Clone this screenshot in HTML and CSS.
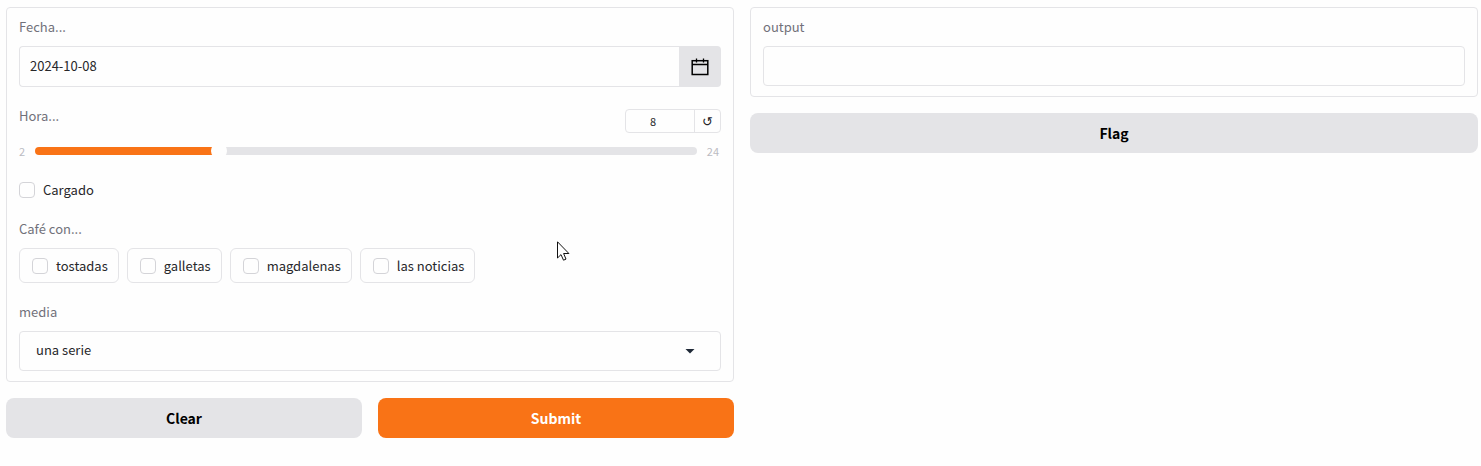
FILE: index.html
```html
<!DOCTYPE html>
<html lang="es">
<head>
<meta charset="utf-8">
<title>Café</title>
<link rel="stylesheet" href="styles.css">
</head>
<body>
<main class="columns">
  <form class="column">
    <div class="panel form-panel">
      <div class="field date-field">
        <label class="label" for="fecha">Fecha...</label>
        <div class="date-row">
          <input class="date-input" id="fecha" type="text" value="2024-10-08">
          <button class="date-button" type="button" aria-label="Calendario">
            <svg width="18" height="18" viewBox="0 0 18 18" fill="none" stroke="#000" aria-hidden="true">
              <rect x="1.2" y="2.7" width="15.6" height="13.8" stroke-width="1.5"/>
              <path d="M1 6.5H17M5.5 .5V4.5M12.5 .5V4.5" stroke-width="1.3"/>
            </svg>
          </button>
        </div>
      </div>
      <div class="field">
        <div class="slider-head">
          <label class="label" for="hora">Hora...</label>
          <div class="number-box">
            <input class="number-input" type="number" min="2" max="24" value="8" aria-label="Valor de hora">
            <button class="reset" type="button" aria-label="Restablecer">↺</button>
          </div>
        </div>
        <div class="slider-row">
          <span class="bound">2</span>
          <input class="slider" id="hora" type="range" min="2" max="24" value="8">
          <span class="bound">24</span>
        </div>
      </div>
      <label class="check"><input class="box" type="checkbox">Cargado</label>
      <fieldset class="group">
        <legend class="label">Café con...</legend>
        <div class="options">
          <label class="check option"><input class="box" type="checkbox">tostadas</label>
          <label class="check option"><input class="box" type="checkbox">galletas</label>
          <label class="check option"><input class="box" type="checkbox">magdalenas</label>
          <label class="check option"><input class="box" type="checkbox">las noticias</label>
        </div>
      </fieldset>
      <div class="field">
        <label class="label" for="media">media</label>
        <div class="select-wrap">
          <select class="select" id="media"><option>una serie</option></select>
          <svg class="caret" width="18" height="18" viewBox="0 0 18 18" aria-hidden="true"><path d="M4.5 7L9 11.5L13.5 7Z" fill="#1f2937"/></svg>
        </div>
      </div>
    </div>
    <div class="actions">
      <button class="button" type="reset">Clear</button>
      <button class="button primary" type="button">Submit</button>
    </div>
  </form>
  <section class="column">
    <div class="panel">
      <div class="field">
        <label class="label" for="output">output</label>
        <input class="output" id="output" type="text" readonly>
      </div>
    </div>
    <button class="button" type="button">Flag</button>
  </section>
</main>
<svg class="pointer" width="13" height="20" viewBox="0 0 13 20" aria-hidden="true"><path d="M.5 .8V17L4 13.6L6.5 19.2L9 18.1L6.6 12.5H11.9Z" fill="#fff" stroke="#111" stroke-width="1"/></svg>
</body>
</html>
```
FILE: styles.css
```css
* {
  box-sizing: border-box;
}

body {
  margin: 0;
  padding: 7px 3px 28px 6px;
  background: #fefefe;
  color: #27272a;
  font: 13px/20px "Noto Sans CJK SC", "Noto Sans", sans-serif;
}

input,
select,
button {
  margin: 0;
  color: inherit;
  font: inherit;
}

button {
  padding: 0;
  border: 0;
  cursor: pointer;
}

.columns {
  display: grid;
  grid-template-columns: 1fr 1fr;
  gap: 16px;
  align-items: start;
}

.column {
  display: flex;
  flex-direction: column;
  gap: 16px;
  min-width: 0;
}

.panel {
  padding: 9px 12px 10px;
  border: 1px solid #e4e4e7;
  border-radius: 4px;
}

.form-panel {
  display: flex;
  flex-direction: column;
  gap: 19px;
}

.field {
  display: flex;
  flex-direction: column;
  gap: 8px;
}

.label {
  padding: 0 0 2px;
  color: #71717a;
  line-height: 19px;
}

.date-field {
  padding-bottom: 3px;
}

.date-row {
  display: flex;
  height: 41px;
}

.date-input,
.output,
.select {
  flex: 1;
  min-width: 0;
  padding: 0 10px 2px;
  border: 1px solid #e4e4e7;
  border-radius: 4px;
  background: #fefefe;
}

.date-input {
  border-right: 0;
  border-radius: 4px 0 0 4px;
}

.date-button {
  display: flex;
  align-items: center;
  justify-content: center;
  width: 42px;
  border-radius: 0 4px 4px 0;
  background: #e4e4e7;
}

.output {
  flex: none;
  height: 40px;
}

.slider-head {
  display: flex;
  justify-content: space-between;
  height: 24px;
}

.slider-head .label {
  margin-top: -3px;
}

.number-box {
  display: flex;
  width: 96px;
  border: 1px solid #e4e4e7;
  border-radius: 4px;
  font-size: 11px;
}

.number-input {
  flex: 1;
  min-width: 0;
  padding: 0 14px 0 0;
  border: 0;
  background: none;
  text-align: center;
  appearance: textfield;
}

.number-input::-webkit-inner-spin-button {
  appearance: none;
  margin: 0;
}

.reset {
  width: 26px;
  border-left: 1px solid #e4e4e7;
  background: none;
  font-size: 13px;
}

.slider-row {
  display: flex;
  align-items: center;
  gap: 10px;
  height: 20px;
  padding-right: 2px;
}

.bound {
  color: #bbbbc2;
  font-size: 11px;
}

.slider {
  flex: 1;
  min-width: 0;
  height: 16px;
  appearance: none;
  background: none;
}

.slider::-webkit-slider-runnable-track {
  height: 8px;
  border-radius: 4px;
  background: linear-gradient(to right, #f97316 28%, #e4e4e7 28%);
}

.slider::-webkit-slider-thumb {
  width: 16px;
  height: 16px;
  margin-top: -4px;
  border-radius: 50%;
  appearance: none;
  background: #fefefe;
}

.check {
  display: flex;
  align-items: center;
  gap: 8px;
}

.box {
  width: 16px;
  height: 16px;
  border: 1px solid #d4d4d8;
  border-radius: 4px;
  appearance: none;
  background: #fefefe;
}

.box:checked {
  background: #f97316;
}

.group {
  min-width: 0;
  margin: 0;
  padding: 0;
  border: 0;
}

.options {
  display: flex;
  flex-wrap: wrap;
  gap: 8px;
  padding-top: 8px;
}

.option {
  height: 35px;
  padding: 0 10px 0 12px;
  border: 1px solid #e4e4e7;
  border-radius: 6px;
}

.select-wrap {
  position: relative;
  display: flex;
  height: 40px;
}

.select {
  padding: 0 16px 2px;
  appearance: none;
}

.caret {
  position: absolute;
  top: 11px;
  right: 22px;
  pointer-events: none;
}

.actions {
  display: grid;
  grid-template-columns: 1fr 1fr;
  gap: 16px;
}

.button {
  height: 40px;
  border-radius: 8px;
  background: #e4e4e7;
  color: #000;
  font-size: 14px;
  font-weight: 600;
}

.primary {
  background: #f97316;
  color: #fff;
}

.pointer {
  position: absolute;
  top: 241px;
  left: 557px;
  pointer-events: none;
}
```
